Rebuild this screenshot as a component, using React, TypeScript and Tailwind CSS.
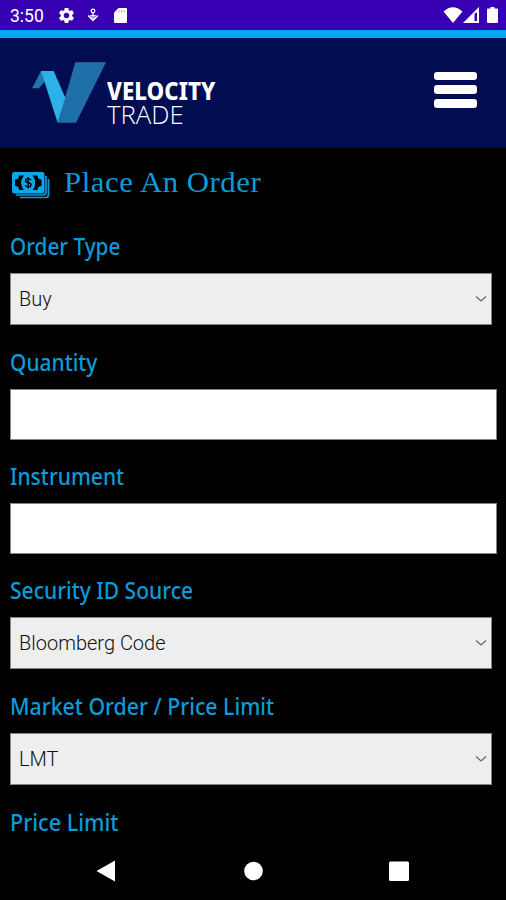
import { MdSettings } from "react-icons/md";

type FieldProps = {
  label: string;
  scale: string;
  value?: string;
};

const StatusBar = () => (
  <div className="h-[30px] shrink-0 bg-[#3700b3] flex items-center justify-between text-white">
    <div className="flex items-center pl-2.5">
      <span className="w-[47px] text-[17.5px] leading-[30px] pt-0.5 font-[Roboto,sans-serif]">3:50</span>
      <MdSettings className="w-[19px] h-[19px]" />
      <svg className="ml-[11px] w-3 h-[15px]" viewBox="0 0 12 15" fill="none" stroke="currentColor">
        <circle cx="6" cy="3" r="1.800" strokeWidth="1.3" />
        <path d="M6 5v4" strokeWidth="1.3" />
        <path d="M1.200 7.500l4.800 5 4.800-5" strokeWidth="1.500" />
        <path d="M3.500 7.500h5L6 11z" strokeWidth="1" />
      </svg>
      <svg className="ml-[15px] w-[13px] h-[15px]" viewBox="0 0 13 15" fill="currentColor">
        <path d="M4.500 0H12a1 1 0 0 1 1 1v13a1 1 0 0 1-1 1H1a1 1 0 0 1-1-1V4.500z" />
        <path d="M5 2v2.500M7.500 2v2.500M10 2v2.500" stroke="#3700b3" strokeOpacity=".4" />
      </svg>
    </div>
    <div className="flex items-center pr-[8px]">
      <svg className="w-5 h-4" viewBox="0 0 20 16" fill="currentColor">
        <path d="M0.500 4.500Q10-4 19.500 4.500L10 16z" />
      </svg>
      <svg className="w-4 h-4" viewBox="0 0 16 16" fill="currentColor">
        <path fillRule="evenodd" d="M0 16L16 0V16zM11.500 6.500V14H14V5.500z" />
      </svg>
      <svg className="ml-[8px] w-[11px] h-4" viewBox="0 0 11 16" fill="currentColor">
        <path d="M3.500 0h4v1.500H10a1 1 0 0 1 1 1V15a1 1 0 0 1-1 1H1a1 1 0 0 1-1-1V2.500a1 1 0 0 1 1-1h2.500z" />
      </svg>
    </div>
  </div>
);

const Logo = () => (
  <div className="flex items-start">
    <svg className="w-[74px] h-[61px]" viewBox="35 37 222 181">
      <path d="M62 63L35 115H56L72 96L84 74z" fill="#1f78a8" />
      <path d="M165 37H257L167 218H112z" fill="#1f70a8" />
      <path d="M62 63H100L135 143L112 218z" fill="#2cb1e8" />
    </svg>
    <div className="ml-[1px] pt-[16px] text-white whitespace-nowrap">
      <div className="w-0 h-6 text-[25px] leading-[24px] font-extrabold origin-left scale-x-[.892] font-['Noto_Sans',sans-serif]">VELOCITY</div>
      <div className="w-0 h-6 text-[25px] leading-[24px] font-light origin-left scale-x-[1.03] font-['Open_Sans',sans-serif]">TRADE</div>
    </div>
  </div>
);

const MoneyIcon = () => (
  <svg className="w-[38px] h-[27px] mt-px" viewBox="0 0 38 27" fill="none">
    <path d="M36.500 7v15.500a3 3 0 0 1-3 3H8" stroke="#079bdd" strokeWidth="1.700" />
    <path d="M34 4v16a3 3 0 0 1-3 3H4" stroke="#079bdd" strokeWidth="1.700" />
    <rect width="32.500" height="21.500" rx="2.500" fill="#08a7ec" />
    <path d="M7 3.500h5a12 12 0 0 0 0 14.500H7a4 4 0 0 0-4-4V7.500a4 4 0 0 0 4-4zM20.500 3.500h5a4 4 0 0 0 4 4V14a4 4 0 0 0-4 4h-5a12 12 0 0 0 0-14.500z" fill="#000" />
    <ellipse cx="16.200" cy="10.800" rx="7" ry="8" fill="#08a7ec" />
    <path d="M19 8.300c-.6-1.300-1.600-1.600-2.800-1.600-3.600 0-3.600 3.700 0 4.100 3.800.5 3.600 4.100 0 4.100-1.500 0-2.600-.6-3-1.800M16.200 5v11.500" stroke="#000" strokeWidth="1.400" />
  </svg>
);

const Label = ({ children, scale }: { children: string; scale: string }) => (
  <label className={`block w-max h-[52px] text-[23px] leading-[50px] font-medium text-[#0b9bd8] whitespace-nowrap font-['Noto_Sans',sans-serif] origin-left ${scale}`}>
    {children}
  </label>
);

const SelectField = ({ label, value, scale }: FieldProps) => (
  <div className="h-[116px]">
    <Label scale={scale}>{label}</Label>
    <div className="w-[482px] h-[52px] border border-[#858585] bg-[#eee] flex items-center justify-between pl-2 pr-1">
      <span className="text-[20px] text-[#111] font-[Roboto,sans-serif] font-light">{value}</span>
      <svg className="w-3 h-2" viewBox="0 0 12 8" fill="none" stroke="#666" strokeWidth="1.300">
        <path d="M1 1.500l5 4.500 5-4.500" />
      </svg>
    </div>
  </div>
);

const InputField = ({ label, scale }: FieldProps) => (
  <div className="h-[114px]">
    <Label scale={scale}>{label}</Label>
    <input className="block w-[487px] h-[51px] border border-[#858585] bg-white px-2" />
  </div>
);

const NavBar = () => (
  <div className="absolute inset-x-0 bottom-0 h-[58px] bg-black text-white">
    <svg className="w-full h-full" viewBox="0 0 506 58" fill="currentColor">
      <path d="M96.500 29L115 18.500V39.500z" />
      <circle cx="253.500" cy="29" r="9.300" />
      <rect x="389" y="19.500" width="20" height="19.500" rx="1.500" />
    </svg>
  </div>
);

const App = () => {
  return (
    <div className="relative w-full h-[900px] overflow-hidden bg-black flex flex-col">
      <StatusBar />
      <div className="h-[7.500px] shrink-0 bg-[#03a9ee]" />
      <header className="h-[110.500px] shrink-0 bg-[#020c50] flex justify-between pl-8 pr-[29px] pt-[24px]">
        <Logo />
        <button className="flex flex-col gap-[5px] h-9 mt-[10px]" aria-label="Menu">
          <span className="w-[43px] h-[9px] rounded-[3px] bg-white" />
          <span className="w-[43px] h-[9px] rounded-[3px] bg-white" />
          <span className="w-[43px] h-[9px] rounded-[3px] bg-white" />
        </button>
      </header>
      <main className="pl-2.5 pt-px">
        <div className="h-[72px] flex items-center pl-[2px]">
          <MoneyIcon />
          <h1 className="ml-[14px] mb-1 text-[29px] tracking-[.500px] text-[#0b9bd8] font-['Liberation_Serif',serif] origin-left scale-x-[1.062]">Place An Order</h1>
        </div>
        <SelectField label="Order Type" scale="scale-x-[.9]" value="Buy" />
        <InputField label="Quantity" scale="scale-x-[.91]" />
        <InputField label="Instrument" scale="scale-x-[.914]" />
        <SelectField label="Security ID Source" scale="scale-x-[.914]" value="Bloomberg Code" />
        <SelectField label="Market Order / Price Limit" scale="scale-x-[.924]" value="LMT" />
        <Label scale="scale-x-[.938]">Price Limit</Label>
      </main>
      <NavBar />
    </div>
  );
};

export default App;
